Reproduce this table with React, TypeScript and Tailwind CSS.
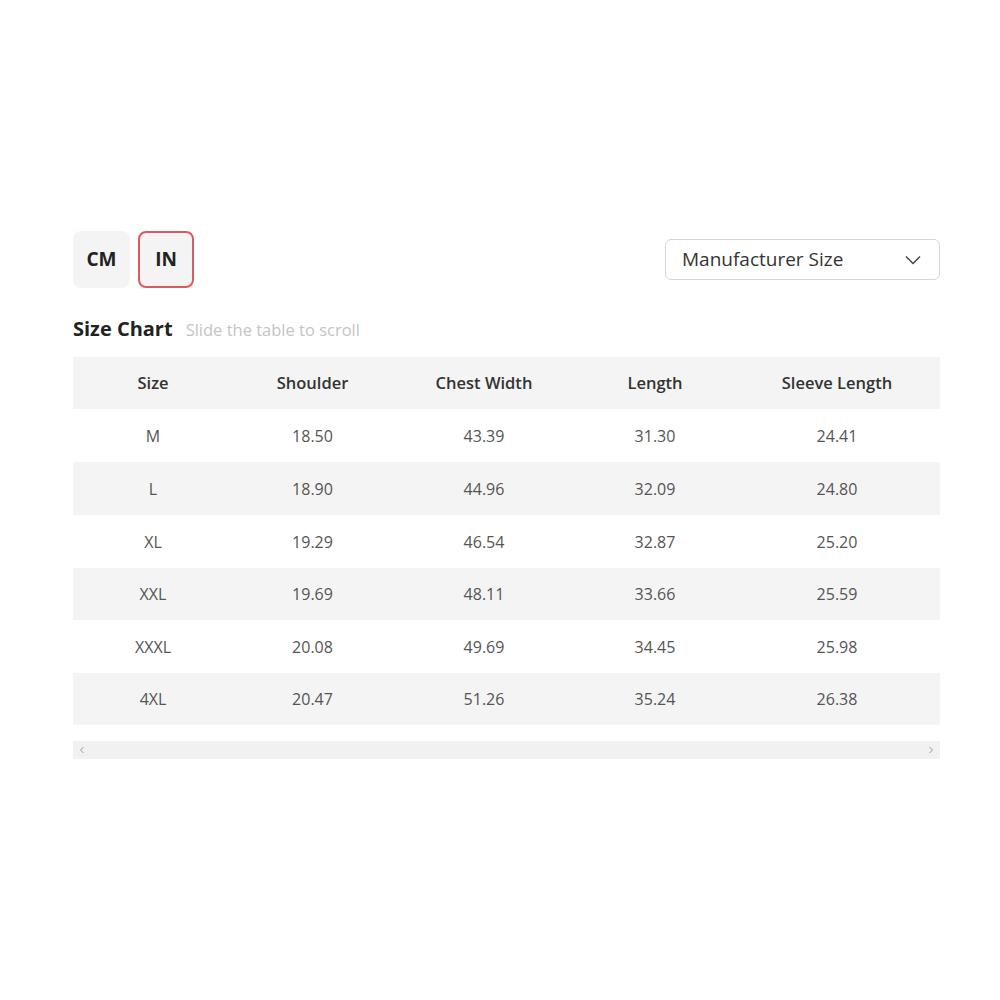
import React from "react";

const rows = [
  ["M", "18.50", "43.39", "31.30", "24.41"],
  ["L", "18.90", "44.96", "32.09", "24.80"],
  ["XL", "19.29", "46.54", "32.87", "25.20"],
  ["XXL", "19.69", "48.11", "33.66", "25.59"],
  ["XXXL", "20.08", "49.69", "34.45", "25.98"],
  ["4XL", "20.47", "51.26", "35.24", "26.38"],
];
const heads = ["Size", "Shoulder", "Chest Width", "Length", "Sleeve Length"];
const widths = ["w-[160px]", "w-[159px]", "w-[184px]", "w-[158px]", "w-[206px]"];
const heights = ["h-[53px]", "h-[53px]", "h-[53px]", "h-[52px]", "h-[53px]", "h-[52px]"];

export default function App() {
  return (
    <div className="w-[1000px] h-[1000px] bg-white pt-[231px] pl-[73px] pr-[60px]" style={{ fontFamily: '"Open Sans", "Noto Sans", sans-serif' }}>
      <div className="flex items-start justify-between w-[867px]">
        <div className="flex gap-[8px]">
          <div className="w-[57px] h-[57px] rounded-[8px] bg-[#f4f4f4] flex items-center justify-center text-[19px] font-bold text-[#222]">CM</div>
          <div className="w-[56px] h-[57px] rounded-[8px] bg-[#f4f4f4] border-2 border-[#e0585a] flex items-center justify-center text-[19px] font-bold text-[#222]">IN</div>
        </div>
        <div className="mt-[8px] w-[275px] h-[41px] border border-[#d6d6d6] rounded-[6px] flex items-center justify-between pl-[16px] pr-[18px]">
          <span className="text-[19px] text-[#333]">Manufacturer Size</span>
          <svg width="16" height="10" viewBox="0 0 16 10" fill="none" stroke="#444" strokeWidth="1.5"><path d="M1 1.5 L8 8.5 L15 1.5" /></svg>
        </div>
      </div>
      <div className="flex items-baseline mt-[26px] gap-[13px]">
        <span className="text-[20px] font-bold text-[#222]">Size Chart</span>
        <span className="text-[16.5px] text-[#c4c4c4]">Slide the table to scroll</span>
      </div>
      <div className="w-[867px] mt-[13px]">
        <div className="flex h-[52px] bg-[#f4f4f4] items-center">
          {heads.map((h, i) => (
            <div key={h} className={`${widths[i]} text-center text-[16.5px] font-semibold text-[#333]`}>{h}</div>
          ))}
        </div>
        {rows.map((r, ri) => (
          <div key={r[0]} className={`flex ${heights[ri]} items-center ${ri % 2 === 1 ? "bg-[#f4f4f4]" : "bg-white"}`}>
            {r.map((c, i) => (
              <div key={i} className={`${widths[i]} text-center text-[16px] text-[#555]`}>{c}</div>
            ))}
          </div>
        ))}
        <div className="mt-[16px] h-[18px] bg-[#f1f1f1] flex items-center justify-between px-[6px]">
          <svg width="6" height="8" viewBox="0 0 6 8"><path d="M4.5 1 L1.5 4 L4.5 7" stroke="#999" fill="none" strokeWidth="1" /></svg>
          <svg width="6" height="8" viewBox="0 0 6 8"><path d="M1.5 1 L4.5 4 L1.5 7" stroke="#999" fill="none" strokeWidth="1" /></svg>
        </div>
      </div>
    </div>
  );
}
